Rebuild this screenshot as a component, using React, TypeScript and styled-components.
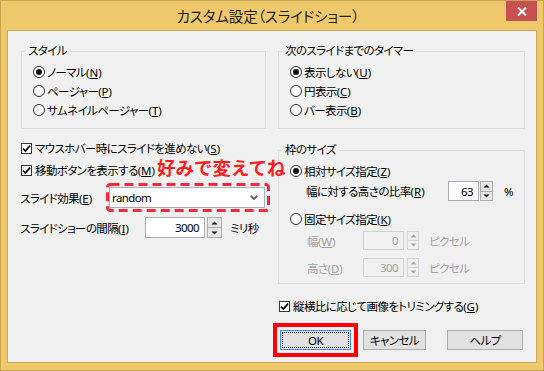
import React from "react";
import styled, { createGlobalStyle, css } from "styled-components";

const Global = createGlobalStyle`
  html, body { margin: 0; padding: 0; background: #ffffff; }
  body {
    font-family: "Noto Sans", "Noto Sans CJK JP", sans-serif;
    font-size: 11.5px;
    letter-spacing: -0.6px;
    color: #000;
    font-feature-settings: "palt";
  }
  * { box-sizing: border-box; }
`;

const Window = styled.div`
  width: 544px;
  height: 371px;
  background: #f0c86c;
  border: 1px solid #c9a452;
  display: flex;
  flex-direction: column;
  padding: 0 6px 7px 6px;
`;

const TitleBar = styled.div`
  height: 29px;
  display: grid;
  grid-template-columns: 1fr auto 1fr;
  align-items: start;
`;

const Title = styled.div`
  grid-column: 2;
  font-family: "Noto Sans CJK JP", sans-serif;
  font-size: 14.5px;
  letter-spacing: -0.1px;
  line-height: 29px;
  color: #1e1e1e;
  padding-right: 8px;
`;

const CloseButton = styled.div`
  grid-column: 3;
  justify-self: end;
  width: 31px;
  height: 20px;
  background: #c75050;
  display: flex;
  align-items: center;
  justify-content: center;
`;

const Client = styled.div`
  flex: 1;
  position: relative;
  background: #f0f0f0;
  border: 1px solid #c8a65c;
  display: grid;
  grid-template-columns: 245px 247px;
  column-gap: 12px;
  align-items: start;
  padding: 13px 11px 0 13px;
`;

const Column = styled.div`
  display: flex;
  flex-direction: column;
  align-items: stretch;
`;

const Group = styled.fieldset<{ $mt?: number; $pb?: number }>`
  margin: ${(p) => p.$mt ?? 0}px 0 0 0;
  padding: 4px 0 ${(p) => p.$pb ?? 9}px 11px;
  border: 1px solid #dcdcdc;
  min-width: 0;
  display: flex;
  flex-direction: column;
`;

const Legend = styled.legend`
  padding: 0 3px;
  margin-left: -8px;
  line-height: 14px;
`;

const Row = styled.div<{ $h?: number; $mt?: number; $pl?: number; $disabled?: boolean }>`
  display: flex;
  align-items: center;
  height: ${(p) => p.$h ?? 19}px;
  margin-top: ${(p) => p.$mt ?? 0}px;
  padding-left: ${(p) => p.$pl ?? 0}px;
  white-space: nowrap;
  color: ${(p) => (p.$disabled ? "#a2a2a2" : "#000")};
`;

const RadioCircle = styled.span<{ $checked?: boolean }>`
  width: 12px;
  height: 12px;
  border-radius: 50%;
  border: 1px solid #333;
  background: #fff;
  margin-right: 2px;
  flex: none;
  display: flex;
  align-items: center;
  justify-content: center;
  &::after {
    content: "";
    display: ${(p) => (p.$checked ? "block" : "none")};
    width: 6px;
    height: 6px;
    border-radius: 50%;
    background: #111;
  }
`;

const CheckBox = styled.span`
  width: 11px;
  height: 11px;
  border: 1px solid #333;
  background: #fff;
  margin-right: 3px;
  flex: none;
  display: flex;
  align-items: center;
  justify-content: center;
`;

const Label = styled.span<{ $w?: number; $ml?: number }>`
  ${(p) => p.$w !== undefined && css`width: ${p.$w}px; flex: none;`}
  margin-left: ${(p) => p.$ml ?? 0}px;
`;

const Key = styled.u`
  letter-spacing: 0;
  padding-left: 0.5px;
  text-underline-offset: 1px;
`;

const Select = styled.div`
  width: 156px;
  height: 21px;
  border: 1px solid #acadb3;
  background: #fff;
  display: flex;
  align-items: center;
  justify-content: space-between;
  padding: 0 6px 0 2px;
  color: #000;
`;

const SpinWrap = styled.div<{ $gap: number }>`
  display: flex;
  align-items: stretch;
  gap: ${(p) => p.$gap}px;
  height: 100%;
`;

const NumInput = styled.div<{ $w: number; $disabled?: boolean }>`
  width: ${(p) => p.$w}px;
  height: 100%;
  border: 1px solid ${(p) => (p.$disabled ? "#d2d2d2" : "#acadb3")};
  background: ${(p) => (p.$disabled ? "#f0f0f0" : "#fff")};
  color: ${(p) => (p.$disabled ? "#a2a2a2" : "#000")};
  display: flex;
  align-items: center;
  justify-content: flex-end;
  padding-right: 5px;
`;

const Spinner = styled.div<{ $w: number }>`
  width: ${(p) => p.$w}px;
  display: flex;
  flex-direction: column;
`;

const SpinBtn = styled.div<{ $disabled?: boolean }>`
  flex: 1;
  border: 1px solid ${(p) => (p.$disabled ? "#d4d4d4" : "#acacac")};
  background: ${(p) => (p.$disabled ? "#f0f0f0" : "#e6e6e6")};
  display: flex;
  align-items: center;
  justify-content: center;
  & + & { border-top: none; }
`;

const ButtonRow = styled.div`
  display: flex;
  margin-top: 15px;
  height: 20px;
`;

const Button = styled.div<{ $w: number; $ml: number; $default?: boolean }>`
  position: relative;
  width: ${(p) => p.$w}px;
  margin-left: ${(p) => p.$ml}px;
  height: 20px;
  background: #e1e1e1;
  border: 1px solid ${(p) => (p.$default ? "#3c8fe0" : "#adadad")};
  display: flex;
  align-items: center;
  justify-content: center;
  ${(p) =>
    p.$default &&
    css`
      outline: 4px solid #ff0000;
      outline-offset: 3px;
      &::after {
        content: "";
        position: absolute;
        inset: 1px;
        border: 1px dotted #000;
      }
    `}
`;

const Note = styled.div`
  position: absolute;
  left: 149px;
  top: 127px;
  font-family: "Noto Sans CJK JP", sans-serif;
  font-feature-settings: normal;
  font-weight: 700;
  font-size: 18.5px;
  line-height: 19px;
  letter-spacing: 0;
  color: #ff1e1e;
  white-space: nowrap;
`;

const DashBox = styled.svg`
  position: absolute;
  left: 98px;
  top: 152px;
`;

const Radio = ({ checked, children }: { checked?: boolean; children: React.ReactNode }) => (
  <Row>
    <RadioCircle $checked={checked} />
    <span>{children}</span>
  </Row>
);

const Check = () => (
  <CheckBox>
    <svg width="9" height="9" viewBox="0 0 9 9">
      <path d="M1 4.6 L3.4 7 L8 1.6" fill="none" stroke="#000" strokeWidth="1.7" />
    </svg>
  </CheckBox>
);

const Arrow = ({ up, color }: { up?: boolean; color: string }) => (
  <svg width="7" height="4" viewBox="0 0 7 4">
    <path d={up ? "M0.5 3.5 L3.5 0.5 L6.5 3.5 Z" : "M0.5 0.5 L3.5 3.5 L6.5 0.5 Z"} fill={color} />
  </svg>
);

const SpinBox = ({
  value,
  w,
  spinW,
  gap,
  disabled,
}: {
  value: string;
  w: number;
  spinW: number;
  gap: number;
  disabled?: boolean;
}) => {
  const c = disabled ? "#a8a8a8" : "#111";
  return (
    <SpinWrap $gap={gap}>
      <NumInput $w={w} $disabled={disabled}>{value}</NumInput>
      <Spinner $w={spinW}>
        <SpinBtn $disabled={disabled}><Arrow up color={c} /></SpinBtn>
        <SpinBtn $disabled={disabled}><Arrow color={c} /></SpinBtn>
      </Spinner>
    </SpinWrap>
  );
};

export default function App() {
  return (
    <>
      <Global />
      <Window>
        <TitleBar>
          <Title>カスタム設定（スライドショー）</Title>
          <CloseButton>
            <svg width="10" height="9" viewBox="0 0 10 9">
              <path d="M1 0.5 L9 8.5 M9 0.5 L1 8.5" stroke="#fff" strokeWidth="2" />
            </svg>
          </CloseButton>
        </TitleBar>
        <Client>
          <Column>
            <Group>
              <Legend>スタイル</Legend>
              <Radio checked>ノーマル(<Key>N</Key>)</Radio>
              <Radio>ページャー(<Key>P</Key>)</Radio>
              <Radio>サムネイルページャー(<Key>T</Key>)</Radio>
            </Group>
            <Row $h={18} $mt={10}>
              <Check />
              <span>マウスホバー時にスライドを進めない(<Key>S</Key>)</span>
            </Row>
            <Row $h={18} $mt={4}>
              <Check />
              <span>移動ボタンを表示する(<Key>M</Key>)</span>
            </Row>
            <Row $h={21} $mt={8}>
              <Label $w={89} $ml={-1}>スライド効果(<Key>E</Key>)</Label>
              <Select>
                <span>random</span>
                <svg width="8" height="5" viewBox="0 0 8 5">
                  <path d="M0.8 0.8 L4 4 L7.2 0.8" fill="none" stroke="#5a5a5a" strokeWidth="1.8" />
                </svg>
              </Select>
            </Row>
            <Row $h={21} $mt={9}>
              <Label $w={125} $ml={-1}>スライドショーの間隔(<Key>I</Key>)</Label>
              <SpinBox value="3000" w={60} spinW={15} gap={2} />
              <Label $ml={8}>ミリ秒</Label>
            </Row>
          </Column>
          <Column>
            <Group>
              <Legend>次のスライドまでのタイマー</Legend>
              <Radio checked>表示しない(<Key>U</Key>)</Radio>
              <Radio>円表示(<Key>C</Key>)</Radio>
              <Radio>バー表示(<Key>B</Key>)</Radio>
            </Group>
            <Group $mt={14} $pb={6}>
              <Legend>枠のサイズ</Legend>
              <Radio checked>相対サイズ指定(<Key>Z</Key>)</Radio>
              <Row $h={20} $mt={1} $pl={16}>
                <Label $w={142}>幅に対する高さの比率(<Key>R</Key>)</Label>
                <SpinBox value="63" w={31} spinW={13} gap={1} />
                <Label $ml={11}>%</Label>
              </Row>
              <Row $mt={8}>
                <RadioCircle />
                <span>固定サイズ指定(<Key>K</Key>)</span>
              </Row>
              <Row $h={19} $mt={3} $pl={17} $disabled>
                <Label $w={56}>幅(<Key>W</Key>)</Label>
                <SpinBox value="0" w={41} spinW={12} gap={3} disabled />
                <Label $ml={10}>ピクセル</Label>
              </Row>
              <Row $h={19} $mt={8} $pl={17} $disabled>
                <Label $w={56}>高さ(<Key>D</Key>)</Label>
                <SpinBox value="300" w={41} spinW={12} gap={3} disabled />
                <Label $ml={10}>ピクセル</Label>
              </Row>
            </Group>
            <Row $h={18} $mt={13} $pl={1}>
              <Check />
              <span>縦横比に応じて画像をトリミングする(<Key>G</Key>)</span>
            </Row>
            <ButtonRow>
              <Button $w={71} $ml={2} $default>OK</Button>
              <Button $w={63} $ml={12}>キャンセル</Button>
              <Button $w={76} $ml={21}>ヘルプ</Button>
            </ButtonRow>
          </Column>
          <Note>好みで変えてね</Note>
          <DashBox width="164" height="29" viewBox="0 0 164 29">
            <rect x="1.5" y="1.5" width="161" height="26" rx="3" fill="none" stroke="#f5283c" strokeWidth="3" strokeDasharray="9 5" />
          </DashBox>
        </Client>
      </Window>
    </>
  );
}
